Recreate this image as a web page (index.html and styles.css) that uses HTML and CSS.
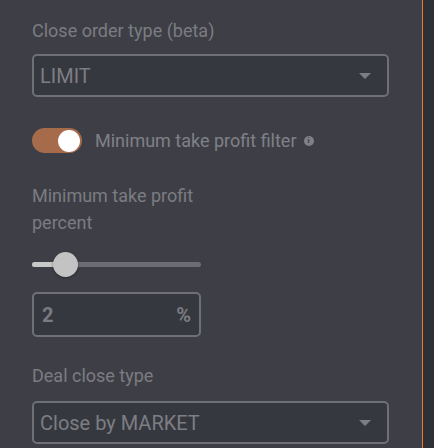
FILE: index.html
```html
<!DOCTYPE html>
<html>
<head>
<meta charset="utf-8">
<link rel="stylesheet" href="styles.css">
</head>
<body>
<div class="layout">
  <div class="panel">
    <div class="label label-first">Close order type (beta)</div>
    <div class="select select-first">
      <span class="select-value">LIMIT</span>
      <svg class="caret" width="12" height="6" viewBox="0 0 12 6"><path d="M0 0h12L6 6z" fill="#7d7e83"/></svg>
    </div>

    <div class="toggle-row">
      <div class="toggle"><div class="knob"></div></div>
      <span class="toggle-label">Minimum take profit filter</span>
      <span class="info">i</span>
    </div>

    <div class="label label-multi">Minimum take profit<br>percent</div>

    <div class="slider">
      <div class="track"><div class="track-fill"></div></div>
      <div class="thumb"></div>
    </div>

    <div class="number-input">
      <span class="number-value">2</span>
      <span class="unit">%</span>
    </div>

    <div class="label label-deal">Deal close type</div>
    <div class="select select-deal">
      <span class="select-value">Close by MARKET</span>
      <svg class="caret" width="12" height="6" viewBox="0 0 12 6"><path d="M0 0h12L6 6z" fill="#7d7e83"/></svg>
    </div>
  </div>
  <div class="divider"></div>
  <div class="strip"></div>
</div>
</body>
</html>
```

FILE: styles.css
```css
html, body {
  margin: 0;
  padding: 0;
  height: 100%;
  overflow: hidden;
}
body {
  font-family: Roboto, "Liberation Sans", sans-serif;
  background: #3e3f46;
}
.layout {
  display: flex;
  height: 448px;
}
.panel {
  flex: 0 0 422px;
  box-sizing: border-box;
  padding: 21px 0 0 32px;
  background: #3e3f46;
}
.divider {
  flex: 0 0 1px;
  background: #f07a2c;
}
.strip {
  flex: 1;
  background: #2e3038;
}
.label {
  font-size: 18px;
  line-height: 20px;
  color: #7b7c81;
}
.label-multi {
  margin-top: 29px;
  line-height: 27px;
}
.label-deal {
  margin-top: 29px;
}
.select {
  width: 357px;
  height: 43px;
  box-sizing: border-box;
  border: 2px solid #6f7075;
  border-radius: 5px;
  background: #363840;
  display: flex;
  align-items: center;
  padding: 0 16px 0 6px;
}
.select-first { margin-top: 13px; }
.select-deal { margin-top: 15px; }
.select-value {
  flex: 1;
  font-size: 20px;
  color: #7d7e83;
}
.caret { display: block; }
.toggle-row {
  margin-top: 31px;
  display: flex;
  align-items: center;
  height: 25px;
}
.toggle {
  width: 50px;
  height: 25px;
  border-radius: 13px;
  background: #a56b4a;
  position: relative;
}
.knob {
  position: absolute;
  right: 2px;
  top: 1.5px;
  width: 22px;
  height: 22px;
  border-radius: 50%;
  background: #ffffff;
}
.toggle-label {
  margin-left: 13px;
  font-size: 18px;
  color: #808186;
}
.info {
  margin-left: 7px;
  width: 10px;
  height: 10px;
  border-radius: 50%;
  background: #808186;
  color: #3e3f46;
  font-size: 8px;
  font-weight: bold;
  line-height: 10px;
  text-align: center;
}
.slider {
  margin-top: 16px;
  width: 169px;
  height: 25px;
  position: relative;
  display: flex;
  align-items: center;
}
.track {
  width: 100%;
  height: 5px;
  border-radius: 3px;
  background: #6c6d72;
}
.track-fill {
  width: 34px;
  height: 100%;
  border-radius: 3px;
  background: #c8c8c8;
}
.thumb {
  position: absolute;
  left: 21px;
  top: 0;
  width: 25px;
  height: 25px;
  border-radius: 50%;
  background: #c3c3c3;
  box-shadow: 0 1px 3px rgba(0,0,0,0.35);
}
.number-input {
  margin-top: 15px;
  width: 169px;
  height: 45px;
  box-sizing: border-box;
  border: 2px solid #6f7075;
  border-radius: 5px;
  background: #363840;
  display: flex;
  align-items: center;
  justify-content: space-between;
  padding: 0 8px 0 8px;
  color: #7b7c81;
}
.number-value {
  font-size: 20px;
  font-weight: bold;
}
.unit {
  font-size: 20px;
  font-weight: bold;
}
```
